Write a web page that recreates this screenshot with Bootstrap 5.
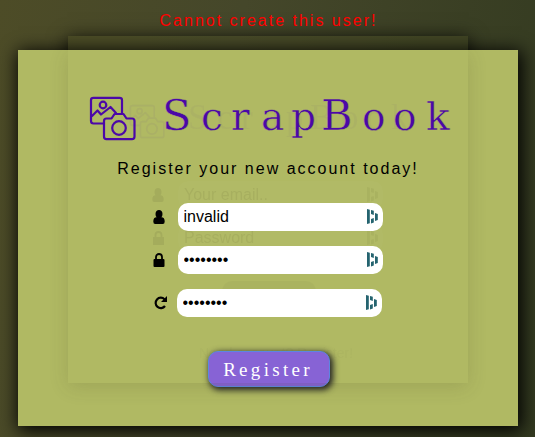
<!DOCTYPE html>
<html lang="en">
<head>
<meta charset="utf-8">
<meta name="viewport" content="width=device-width, initial-scale=1">
<title>ScrapBook</title>
<link href="https://cdn.jsdelivr.net/npm/bootstrap@5.3.0/dist/css/bootstrap.min.css" rel="stylesheet">
<style>
body{height:437px;font:16px/20px "Liberation Sans",Arial,sans-serif;color:#000;background:linear-gradient(100deg,#4d4c27 0%,#45472a 40%,#333a20 100%)}
.notice{height:50px;padding:11px 0 0 2px;color:#f00;letter-spacing:2px}
.panel-back{left:68px;top:36px;width:400px;height:347px;background:rgba(80,84,37,.3);box-shadow:0 4px 18px 1px rgba(0,0,0,.85)}
.panel-front{width:500px;height:376px;margin-left:18px;background:#b0b963;box-shadow:2px 3px 17px 2px #000;padding-top:38px}
.ghost-edge{left:68px;top:50px;width:400px;height:333px;box-shadow:0 4px 18px rgba(60,65,30,.16);clip-path:inset(0 -30px -30px -30px)}
.ghost{left:0;top:0;opacity:.07}
.brand-art{display:block;margin-left:62px}
.script{font-family:"DejaVu Serif",serif;font-size:39px;fill:#4b08a8;stroke:#b0b963;stroke-width:.45}
.script .cap{font-size:43px}
.script-ghost{font-family:"Liberation Serif",serif;font-size:35px;fill:#4b08a8;opacity:.5}
.lead-in{letter-spacing:2px;height:43px;padding-top:11px;margin-bottom:12px}
.field-row{height:28px;margin:0 0 15px 134px}
.field-row.last{margin-left:133px;margin-bottom:0}
.field-icon{width:14px;height:16px;margin-right:12px}
.field-row.last .field-icon{width:16px;margin:0 8px 0 2px}
.field-box{position:relative;width:205px;height:28px}
.field-box input{width:205px;height:28px;border:0;border-radius:10px;padding:0 24px 1px 5.500px;font:16px "Liberation Sans",Arial,sans-serif;background:#fff;outline:0;color:#000}
.dash{right:4px;top:6px;fill:#24636f}
.submit{width:122px;height:36px;border:1px solid #5c86e0;border-radius:10px;background:#8763d5;color:#fff;font:19px/32px "Liberation Serif",serif;letter-spacing:3.3px;padding:2px 2px 0 0;box-shadow:2px 2px 6px 1px #222;margin-left:190px;margin-top:34px}
</style>
<script src="https://cdn.jsdelivr.net/npm/bootstrap@5.3.0/dist/js/bootstrap.bundle.min.js"></script>
</head>
<body class="position-relative overflow-hidden">
<div class="panel-back position-absolute"></div>
<div class="notice position-relative text-center">Cannot create this user!</div>
<main class="panel-front position-relative">
  <svg class="brand-art" width="380" height="60" viewBox="80 88 380 60">
    <g id="camera" fill="none" stroke="#4b08a8" stroke-width="2.200" stroke-linejoin="round" stroke-linecap="round">
      <path d="M103 123.500H93.500Q91 123.500 91 121V100Q91 97.800 93.500 97.800H119.500Q122 97.800 122 100V113M92 116L97.500 110.500L101 114.500L110.500 107L116 113"/>
      <circle cx="103" cy="105" r="3.300"/>
      <path d="M106.500 118.500H111.500L114.500 114H123.500L126.500 118.500H132Q134.500 118.500 134.500 121V136.500Q134.500 139.200 132 139.200H106.500Q104 139.200 104 136.500V121Q104 118.500 106.500 118.500Z"/>
      <circle cx="119" cy="128" r="6.800"/>
    </g>
    <text class="script" y="129.500" x="162 201 231 261 291 321 362 393 426"><tspan class="cap">S</tspan>crap<tspan class="cap">B</tspan>ook</text>
  </svg>
  <div class="lead-in text-center">Register your new account today!</div>
  <form>
    <div class="field-row d-flex align-items-center">
      <svg class="field-icon" viewBox="0 0 14 16"><path id="person" d="M7 1C9 1 10.500 2.500 10.500 5Q10.500 7.300 9.400 8.300Q12.700 8.400 12.700 12.500Q12.700 15 10.800 15H3.200Q1.300 15 1.300 12.500Q1.300 8.400 4.600 8.300Q3.500 7.300 3.500 5C3.500 2.500 5 1 7 1Z"/></svg>
      <div class="field-box"><input type="text" value="invalid" aria-label="Email"><svg class="dash position-absolute" width="12" height="16" viewBox="0 0 12 16"><path id="bars" d="M0 0L2.800 .8V14.200L0 15ZM4 1L6.800 1.800V6L4 5ZM4 10L6.800 9V13.500L4 14.500ZM8 4L10.800 5V11L8 12Z"/></svg></div>
    </div>
    <div class="field-row d-flex align-items-center">
      <svg class="field-icon" viewBox="0 0 14 16"><rect x="1.500" y="7" width="11" height="8" rx="1"/><path d="M4 8V5A3 3 0 0 1 10 5V8" fill="none" stroke="#000" stroke-width="1.800"/></svg>
      <div class="field-box"><input type="password" value="password" aria-label="Password"><svg class="dash position-absolute" width="12" height="16" viewBox="0 0 12 16"><use href="#bars"/></svg></div>
    </div>
    <div class="field-row last d-flex align-items-center">
      <svg class="field-icon" viewBox="0 0 16 16"><path d="M11.500 4.200A5.200 5.200 0 1 0 12 11" fill="none" stroke="#000" stroke-width="2.200"/><path d="M14 1V7H8Z"/></svg>
      <div class="field-box"><input type="password" value="password" aria-label="Repeat password"><svg class="dash position-absolute" width="12" height="16" viewBox="0 0 12 16"><use href="#bars"/></svg></div>
    </div>
    <button class="submit d-block" type="button">Register</button>
  </form>
</main>
<!-- Login panel showing faintly through the registration panel -->
<div class="ghost-edge position-absolute pe-none"></div>
<svg class="ghost position-absolute pe-none" width="535" height="437" aria-hidden="true">
  <defs><mask id="behind"><rect width="535" height="437" fill="#fff"/><g fill="#000"><rect x="178" y="203" width="205" height="28" rx="10"/><rect x="178" y="246" width="205" height="28" rx="10"/><rect x="177" y="289" width="205" height="28" rx="10"/><rect x="207" y="351" width="123" height="37" rx="10"/></g></mask></defs>
  <g mask="url(#behind)">
    <use href="#camera" transform="translate(60.300 30.300) scale(.77)" opacity=".7"/>
    <text class="script-ghost" y="129" x="188 217 241 264 286 310 341 366 391">ScrapBook</text>
    <use href="#person" transform="translate(151 187)"/>
    <rect x="153" y="237" width="11" height="8"/><path d="M155.500 238V235A3 3 0 0 1 161.500 235V238" fill="none" stroke="#000" stroke-width="1.800"/>
    <rect x="178" y="181" width="205" height="28" rx="10" fill="#fff" opacity=".3"/>
    <rect x="178" y="224" width="205" height="28" rx="10" fill="#fff" opacity=".3"/>
    <g fill="#333" font-family="Liberation Sans, sans-serif" font-size="16"><text x="184" y="200">Your email..</text><text x="184" y="243">Password</text><text x="199" y="358" font-size="14" opacity=".35">Need account? Register!</text></g>
    <use href="#bars" transform="translate(367 187)" opacity=".6"/><use href="#bars" transform="translate(367 230)" opacity=".6"/>
    <rect x="222" y="281" width="94" height="34" rx="10" fill="#333" opacity=".5"/>
  </g>
</svg>
</body>
</html>
